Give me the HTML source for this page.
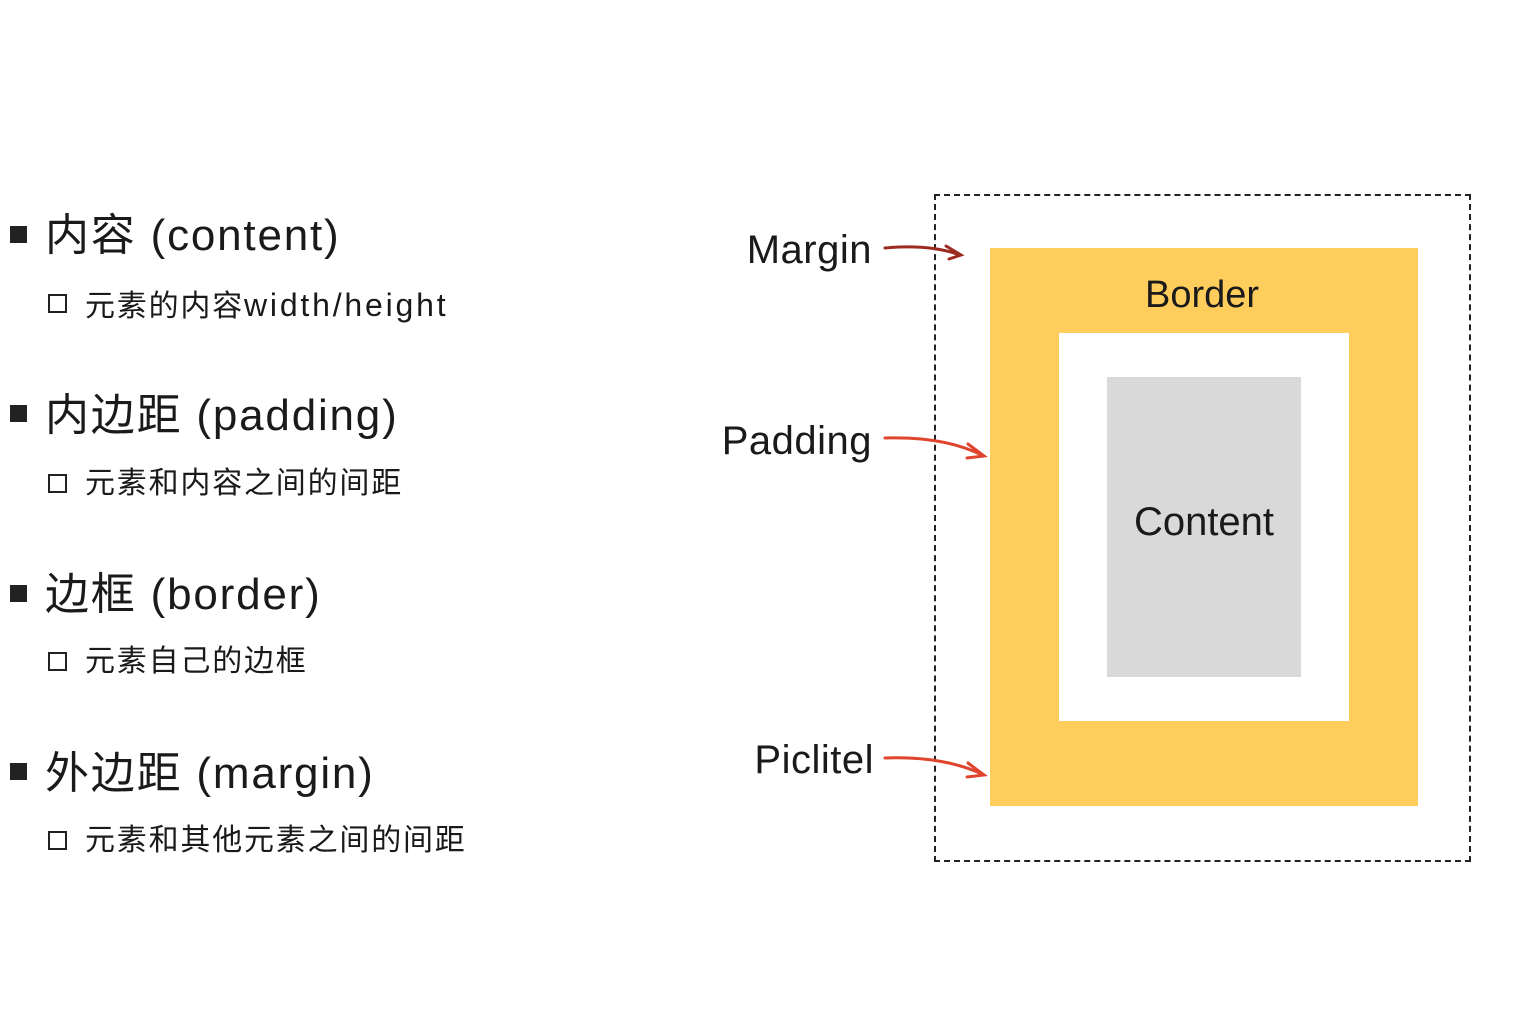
<!DOCTYPE html>
<html><head><meta charset="utf-8"><style>
body{margin:0;width:1536px;height:1024px;background:#fff;position:relative;overflow:hidden;font-family:"Liberation Sans","Noto Sans CJK SC",sans-serif;color:#1a1a1a}
.a{position:absolute;white-space:nowrap;line-height:1}
.h{font-size:44px;letter-spacing:1.8px}
.s{font-size:30px;letter-spacing:1.8px}
.s span{letter-spacing:2.8px;font-size:32px}
.b{position:absolute;width:17px;height:17px;background:#222}
.o{position:absolute;border:2px solid #222;box-sizing:border-box;width:19px;height:19px}
.l{font-size:40px;letter-spacing:0.5px}
</style></head><body>
<div class="b" style="left:10px;top:226px"></div>
<div class="a h" style="left:45px;top:214px">内容 (content)</div>
<div class="o" style="left:48px;top:294px"></div>
<div class="a s" style="left:85px;top:289px">元素的内容<span>width/height</span></div>

<div class="b" style="left:10px;top:405px"></div>
<div class="a h" style="left:45px;top:394px">内边距 (padding)</div>
<div class="o" style="left:48px;top:474px"></div>
<div class="a s" style="left:85px;top:469px">元素和内容之间的间距</div>

<div class="b" style="left:10px;top:585px"></div>
<div class="a h" style="left:45px;top:573px">边框 (border)</div>
<div class="o" style="left:48px;top:652px"></div>
<div class="a s" style="left:85px;top:647px">元素自己的边框</div>

<div class="b" style="left:10px;top:763px"></div>
<div class="a h" style="left:45px;top:752px">外边距 (margin)</div>
<div class="o" style="left:48px;top:831px"></div>
<div class="a s" style="left:85px;top:826px">元素和其他元素之间的间距</div>

<div style="position:absolute;left:934px;top:194px;width:537px;height:668px;border:2px dashed #222;box-sizing:border-box"></div>
<div style="position:absolute;left:990px;top:248px;width:428px;height:558px;background:#FFCD5C"></div>
<div style="position:absolute;left:1059px;top:333px;width:290px;height:388px;background:#fff"></div>
<div style="position:absolute;left:1107px;top:377px;width:194px;height:300px;background:#D9D9D9"></div>
<div class="a" style="left:1102px;width:200px;text-align:center;top:276px;font-size:38px">Border</div>
<div class="a" style="left:1104px;width:200px;text-align:center;top:502px;font-size:40px">Content</div>

<div class="a l" style="right:664px;top:230px">Margin</div>
<div class="a l" style="right:664px;top:421px">Padding</div>
<div class="a l" style="right:662px;top:740px">Piclitel</div>

<svg style="position:absolute;left:0;top:0" width="1536" height="1024" fill="none" stroke-width="3" stroke-linecap="round">
<path d="M885 248 Q930 244 960 255 M946 246 L961 255 L949 259" stroke="#9b2a20"/>
<path d="M885 438 Q945 436 984 456 M968 444 L984 456 L967 458" stroke="#e0442c"/>
<path d="M885 758 Q945 756 984 775 M968 763 L984 775 L967 777" stroke="#e0442c"/>
</svg>
</body></html>
